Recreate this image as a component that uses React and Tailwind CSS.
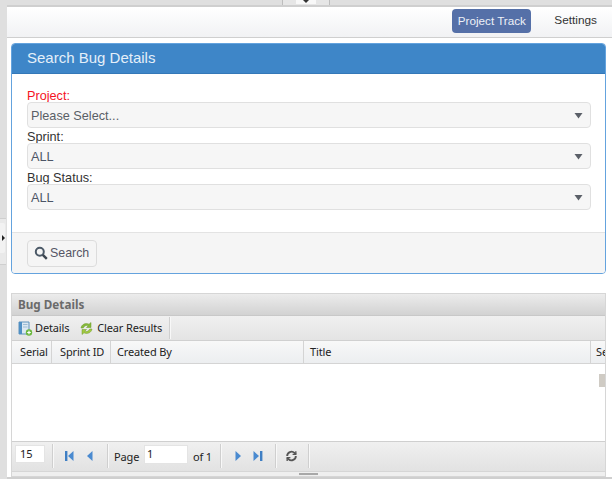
const sans = "font-['Liberation_Sans',Arial,sans-serif]";
const grid = "font-['Noto_Sans',sans-serif]";

function Caret() {
  return (
    <svg width="9" height="7" viewBox="0 0 9 7" className="shrink-0">
      <path d="M0.5 1h8L4.5 6.5z" fill="#5b6068" />
    </svg>
  );
}

function Field({ label, value, red, dark }) {
  return (
    <div>
      <div className={`h-[15px] overflow-hidden text-[12.7px] leading-[18px] ${red ? "text-[#f5121f]" : "text-[#333]"}`}>
        {label}
      </div>
      <div className="flex h-[26px] items-center justify-between rounded-[4px] border border-[#e0e0e0] bg-[#f6f6f6] pl-[3px] pr-[7px]">
        <span className={`pt-[3px] text-[12.7px] ${dark ? "text-[#5a5f66]" : "text-[#4c5566]"}`}>{value}</span>
        <Caret />
      </div>
    </div>
  );
}

function SearchIcon() {
  return (
    <svg width="14" height="14" viewBox="0 0 14 14">
      <circle cx="5.8" cy="5.8" r="4" fill="none" stroke="#4c5a68" strokeWidth="2" />
      <path d="M8.8 8.8l4 4" stroke="#3c4650" strokeWidth="2.4" />
    </svg>
  );
}

function DetailsIcon() {
  return (
    <svg width="15" height="15" viewBox="0 0 15 15">
      <path d="M1 1h10v12H1z" fill="#dbe8f2" stroke="#5f93bd" />
      <path d="M1 1h3v12H1z" fill="#4f8fc4" />
      <path d="M5 3.5h4.5M5 6h4.5" stroke="#9dbcd4" />
      <circle cx="11" cy="11.5" r="3.2" fill="#6cb83f" />
      <path d="M9.2 11.5h3.6M11 9.7v3.6" stroke="#fff" strokeWidth="1.2" />
    </svg>
  );
}

function ClearIcon() {
  return (
    <svg width="15" height="15" viewBox="0 0 15 15">
      <path d="M2 7C2.5 3.5 6.5 1.5 10 3.2L12 1.5v5H7.5l1.7-1.7C7 4 5 5 4.3 7z" fill="#86b93a" stroke="#6a9a2a" strokeWidth="0.5" />
      <path d="M13 8c-.5 3.5-4.5 5.5-8 3.8L3 13.5v-5h4.5L5.8 10.2C8 11 10 10 10.7 8z" fill="#a3c93f" stroke="#6a9a2a" strokeWidth="0.5" />
    </svg>
  );
}

function Sep({ className }) {
  return <div className={`h-[24px] w-[2px] shrink-0 border-l border-r border-l-[#cfcfcf] border-r-[#f8f8f8] ${className}`} />;
}

function Tri({ dir, bar, className }) {
  return (
    <svg width="11" height="12" viewBox="0 0 11 12" className={`shrink-0 ${className}`}>
      {bar && <rect x={dir === "l" ? 1 : 8} y="1" width="2.4" height="10" fill="#3f7fc4" />}
      {dir === "l" ? <path d="M9.5 1v10L4 6z" fill="#4a8ad0" /> : <path d="M1.5 1v10L7 6z" fill="#4a8ad0" />}
    </svg>
  );
}

function HeadCell({ className, children }) {
  return (
    <div className={`flex h-full shrink-0 items-center overflow-hidden whitespace-nowrap border-r border-[#d4d4d4] ${className}`}>
      {children}
    </div>
  );
}

export default function App() {
  return (
    <div className={`${sans} flex h-[479px] w-[612px] flex-col overflow-hidden bg-[#dfdfdf]`}>
      {/* top splitter */}
      <div className="h-[5px] shrink-0">
        <div className="ml-[282px] flex h-[5px] w-[48px] justify-center border-x border-[#bdbdbd] bg-[#e6e6e6]">
          <div className="h-[4px] w-[20px] bg-[#f8f8f8] text-center">
            <div className="mx-auto h-[3px] w-[6px] bg-[#333] [clip-path:polygon(0_0,100%_0,50%_100%)]" />
          </div>
        </div>
      </div>
      <div className="flex min-h-0 flex-1">
        {/* left splitter */}
        <div className="flex w-[7px] shrink-0 flex-col pt-[213px]">
          <div className="flex h-[47px] w-[6px] items-start border-y border-[#cfcfcf] bg-[#e9e9e9] pt-[4px]">
            <div className="flex h-[30px] w-[5px] items-center rounded-r-[2px] bg-[#f2f2f2]">
              <div className="ml-[2px] h-[6px] w-[3px] bg-[#222] [clip-path:polygon(0_0,100%_50%,0_100%)]" />
            </div>
          </div>
        </div>
        <div className="min-w-0 flex-1 border-y-2 border-[#cfcfcf] bg-white">
          {/* nav */}
          <div className="flex h-[31px] items-start justify-end border-b border-[#cfcfcf] bg-gradient-to-b from-white to-[#f1f2f4] pr-[15px] pt-[2px]">
            <div className="flex h-[24px] w-[79px] items-center justify-center rounded-[4px] bg-[#5570a8] text-[11.7px] text-[#eef1f7]">
              Project Track
            </div>
            <div className="ml-[23px] flex h-[24px] items-center text-[11.8px] text-[#333]">Settings</div>
          </div>

          <div className="pl-[4px] pr-[6px] pt-[5px]">
            {/* search panel */}
            <div className="overflow-hidden rounded-[4px] border border-[#64a3de] bg-white">
              <div className="flex h-[29px] items-center bg-[#3e86c8] pl-[15px] text-[15px] text-[#e4eff9]">
                Search Bug Details
              </div>
              <div className="flex h-[159px] flex-col gap-0 border-t border-[#3478b8] pl-[15px] pr-[14px] pt-[13px]">
                <Field label="Project:" value="Please Select..." red dark />
                <Field label="Sprint:" value="ALL" />
                <Field label="Bug Status:" value="ALL" />
              </div>
              <div className="flex h-[41px] items-center border-t border-[#e3e3e3] bg-[#f5f5f5] pl-[15px]">
                <div className="flex h-[27px] w-[70px] items-center gap-[2px] rounded-[4px] border border-[#dcdcdc] bg-[#f5f5f5] pl-[6px] text-[12.4px] text-[#556]">
                  <SearchIcon />
                  Search
                </div>
              </div>
            </div>

            {/* grid panel */}
            <div className={`${grid} mt-[19px] border border-[#d6d6d6] text-[11px] tracking-[-0.15px] text-[#222]`}>
              <div className="flex h-[22px] items-center border-b border-[#c8c8c8] bg-gradient-to-b from-[#ececec] to-[#d2d2d2] pl-[6px] text-[11.7px] font-bold tracking-normal text-[#6b6b6b]">
                Bug Details
              </div>
              <div className="flex h-[25px] items-center border-b border-[#d0d0d0] bg-gradient-to-b from-[#f0f0f0] to-[#e4e4e4] pl-[6px]">
                <DetailsIcon />
                <span className="ml-[2px]">Details</span>
                <span className="ml-[10px]"><ClearIcon /></span>
                <span className="ml-[3px]">Clear Results</span>
                <div className="ml-[7px] h-[22px] w-[2px] border-l border-r border-l-[#cfcfcf] border-r-[#f8f8f8]" />
              </div>
              <div className="flex h-[23px] items-center overflow-hidden border-b border-[#d4d4d4] bg-gradient-to-b from-[#f8f8f8] to-[#eceef0] pl-px">
                <HeadCell className="w-[39px] pl-[7px]">Serial</HeadCell>
                <HeadCell className="w-[59px] pl-[8px]">Sprint ID</HeadCell>
                <HeadCell className="w-[193px] pl-[6px]">Created By</HeadCell>
                <HeadCell className="w-[287px] pl-[6px]">Title</HeadCell>
                <div className="overflow-hidden pl-[5px]">Se</div>
              </div>
              <div className="flex h-[77px] justify-end bg-white pt-[10px]">
                <div className="h-[13px] w-[6px] bg-[#cfcbc4]" />
              </div>
              <div className="flex h-[30px] items-center whitespace-nowrap border-t border-[#cfcfcf] bg-gradient-to-b from-[#f0f0f0] to-[#e2e2e2] pb-px pl-[3px]">
                <div className="mb-[4px] flex h-[18px] w-[30px] shrink-0 items-center border border-[#e4e4e4] bg-white pl-[4px]">15</div>
                <Sep className="ml-[7px]" />
                <Tri dir="l" bar className="ml-[10px]" />
                <Tri dir="l" className="ml-[8px]" />
                <Sep className="ml-[13px]" />
                <span className="ml-[5px] mt-[3px] w-[25px]">Page</span>
                <div className="mb-[3px] ml-[5px] flex h-[19px] w-[44px] shrink-0 items-center border border-[#e4e4e4] bg-white pl-[2px]">1</div>
                <span className="ml-[5px] mt-[3px] w-[19px]">of 1</span>
                <Sep className="ml-[8px]" />
                <Tri dir="r" className="ml-[12px]" />
                <Tri dir="r" bar className="ml-[7px]" />
                <Sep className="ml-[12px]" />
                <svg width="13" height="14" viewBox="0 0 24 24" fill="none" stroke="#555" strokeWidth="3.5" className="ml-[8px] shrink-0">
                  <path d="M4 12a8 8 0 0 1 13.5-5.8L20 8.5M20 12a8 8 0 0 1-13.5 5.8L4 15.5" />
                  <path d="M20 3v6h-6M4 21v-6h6" strokeWidth="2.5" />
                </svg>
                <Sep className="ml-[10px]" />
              </div>
            </div>
            <div className="flex h-[5px] justify-center border-x border-b border-[#d6d6d6] bg-[#efefef] pt-px">
              <div className="h-[2px] w-[19px] bg-[#a8a8a8]" />
            </div>
          </div>
        </div>
      </div>
    </div>
  );
}
